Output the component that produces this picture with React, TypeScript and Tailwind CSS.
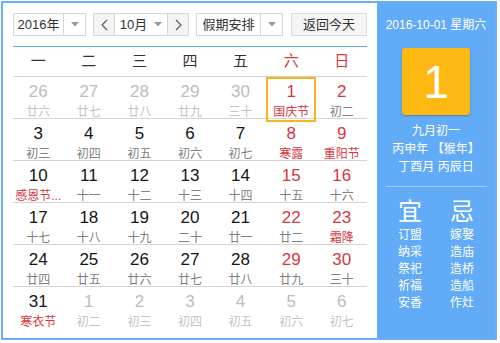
import React from "react";

type Cell = {
  day: number;
  lunar: string;
  muted?: boolean;
  redDay?: boolean;
  redLunar?: boolean;
  selected?: boolean;
};

const weekdays = ["一", "二", "三", "四", "五", "六", "日"];

const rows: Cell[][] = [
  [
    { day: 26, lunar: "廿六", muted: true },
    { day: 27, lunar: "廿七", muted: true },
    { day: 28, lunar: "廿八", muted: true },
    { day: 29, lunar: "廿九", muted: true },
    { day: 30, lunar: "三十", muted: true },
    { day: 1, lunar: "国庆节", redDay: true, redLunar: true, selected: true },
    { day: 2, lunar: "初二", redDay: true },
  ],
  [
    { day: 3, lunar: "初三" },
    { day: 4, lunar: "初四" },
    { day: 5, lunar: "初五" },
    { day: 6, lunar: "初六" },
    { day: 7, lunar: "初七" },
    { day: 8, lunar: "寒露", redDay: true, redLunar: true },
    { day: 9, lunar: "重阳节", redDay: true, redLunar: true },
  ],
  [
    { day: 10, lunar: "感恩节...", redLunar: true },
    { day: 11, lunar: "十一" },
    { day: 12, lunar: "十二" },
    { day: 13, lunar: "十三" },
    { day: 14, lunar: "十四" },
    { day: 15, lunar: "十五", redDay: true },
    { day: 16, lunar: "十六", redDay: true },
  ],
  [
    { day: 17, lunar: "十七" },
    { day: 18, lunar: "十八" },
    { day: 19, lunar: "十九" },
    { day: 20, lunar: "二十" },
    { day: 21, lunar: "廿一" },
    { day: 22, lunar: "廿二", redDay: true },
    { day: 23, lunar: "霜降", redDay: true, redLunar: true },
  ],
  [
    { day: 24, lunar: "廿四" },
    { day: 25, lunar: "廿五" },
    { day: 26, lunar: "廿六" },
    { day: 27, lunar: "廿七" },
    { day: 28, lunar: "廿八" },
    { day: 29, lunar: "廿九", redDay: true },
    { day: 30, lunar: "三十", redDay: true },
  ],
  [
    { day: 31, lunar: "寒衣节", redLunar: true },
    { day: 1, lunar: "初二", muted: true },
    { day: 2, lunar: "初三", muted: true },
    { day: 3, lunar: "初四", muted: true },
    { day: 4, lunar: "初五", muted: true },
    { day: 5, lunar: "初六", muted: true },
    { day: 6, lunar: "初七", muted: true },
  ],
];

const yi = ["订盟", "纳采", "祭祀", "祈福", "安香"];
const ji = ["嫁娶", "造庙", "造桥", "造船", "作灶"];

function Caret() {
  return (
    <svg width="8" height="5" viewBox="0 0 8 5">
      <path d="M0 0h8L4 4.5z" fill="#999" />
    </svg>
  );
}

function Chevron({ dir }: { dir: "left" | "right" }) {
  return (
    <svg width="7" height="12" viewBox="0 0 7 12">
      <polyline
        points={dir === "left" ? "6,1 1,6 6,11" : "1,1 6,6 1,11"}
        fill="none"
        stroke="#555"
        strokeWidth="1.1"
      />
    </svg>
  );
}

function DayCell({ c }: { c: Cell }) {
  const dayColor = c.muted ? "text-[#bdbdbd]" : c.redDay ? "text-[#d9363e]" : "text-[#151515]";
  const lunarColor = c.muted ? "text-[#c4c4c4]" : c.redLunar ? "text-[#d9363e]" : "text-[#808080]";
  return (
    <div
      className={
        "flex flex-col items-center " +
        (c.selected ? "border-2 border-[#f7b519]" : "border-2 border-transparent")
      }
    >
      <div className={"mt-[3px] text-[17px] leading-[20px] " + dayColor}>{c.day}</div>
      <div className={"mt-[2px] text-[12px] leading-[16px] whitespace-nowrap " + lunarColor}>{c.lunar}</div>
    </div>
  );
}

export default function App() {
  return (
    <div
      className="h-[343px] w-[500px] bg-white"
      style={{ fontFamily: '"Liberation Sans", Arial, "Noto Sans CJK SC", sans-serif' }}
    >
      <div className="ml-px mt-px flex h-[339px] w-[496px] border-2 border-[#6aaef3]">
        {/* left: calendar */}
        <div className="w-[374px] px-[10px] pt-[10px]">
          <div className="flex h-[23px] text-[13px] text-[#333]">
            <div className="flex w-[73px] border border-[#d6d6d6]">
              <div className="flex flex-1 items-center justify-center">2016年</div>
              <div className="flex w-[22px] items-center justify-center border-l border-[#d6d6d6]">
                <Caret />
              </div>
            </div>
            <div className="ml-[7px] flex w-[96px] border border-[#d6d6d6]">
              <div className="flex w-[20px] items-center justify-center bg-[#f4f4f4]">
                <Chevron dir="left" />
              </div>
              <div className="flex flex-1 items-center justify-center gap-[7px] border-x border-[#d6d6d6]">
                <span>10月</span>
                <Caret />
              </div>
              <div className="flex w-[20px] items-center justify-center bg-[#f4f4f4]">
                <Chevron dir="right" />
              </div>
            </div>
            <div className="ml-[7px] flex w-[87px] border border-[#d6d6d6]">
              <div className="flex flex-1 items-center justify-center">假期安排</div>
              <div className="flex w-[22px] items-center justify-center border-l border-[#d6d6d6]">
                <Caret />
              </div>
            </div>
            <div className="ml-[8px] flex w-[76px] items-center justify-center border border-[#dcdcdc] bg-[#f5f5f5]">
              返回今天
            </div>
          </div>

          <div className="mt-[10px] h-px bg-[#5ea9f1]" />

          <div className="grid h-[30px] grid-cols-7 border-b border-[#d4d4d4] text-[15px]">
            {weekdays.map((w, i) => (
              <div
                key={w}
                className={"flex items-center justify-center " + (i >= 5 ? "text-[#d9363e]" : "text-[#333]")}
              >
                {w}
              </div>
            ))}
          </div>

          {rows.map((r, ri) => (
            <div
              key={ri}
              className={"grid h-[42px] grid-cols-7 " + (ri < rows.length - 1 ? "border-b border-[#d4d4d4]" : "")}
            >
              {r.map((c, ci) => (
                <DayCell key={ci} c={c} />
              ))}
            </div>
          ))}
        </div>

        {/* right: today panel */}
        <div className="flex flex-1 flex-col items-center bg-[#62abf7] pt-[13px] text-white">
          <div className="text-[12px] leading-[18px]">2016-10-01 星期六</div>
          <div className="mt-[14px] flex h-[67px] w-[68px] items-center justify-center rounded-[3px] bg-[#fdb812] text-[46px] leading-none shadow-[0_1px_2px_rgba(0,0,0,0.25)]">
            1
          </div>
          <div className="mt-[7px] text-[12px] leading-[18px]">九月初一</div>
          <div className="text-[12px] leading-[18px]">丙申年 【猴年】</div>
          <div className="text-[12px] leading-[18px]">丁酉月 丙辰日</div>
          <div className="mt-[10px] h-px w-[101px] bg-white/40" />
          <div className="mt-[11px] grid grid-cols-2">
            <div className="flex w-[52px] flex-col items-center">
              <div className="mb-[1px] text-[24px] leading-[28px]">宜</div>
              {yi.map((t) => (
                <div key={t} className="text-[12px] leading-[17px]">
                  {t}
                </div>
              ))}
            </div>
            <div className="flex w-[52px] flex-col items-center">
              <div className="mb-[1px] text-[24px] leading-[28px]">忌</div>
              {ji.map((t) => (
                <div key={t} className="text-[12px] leading-[17px]">
                  {t}
                </div>
              ))}
            </div>
          </div>
        </div>
      </div>
    </div>
  );
}
